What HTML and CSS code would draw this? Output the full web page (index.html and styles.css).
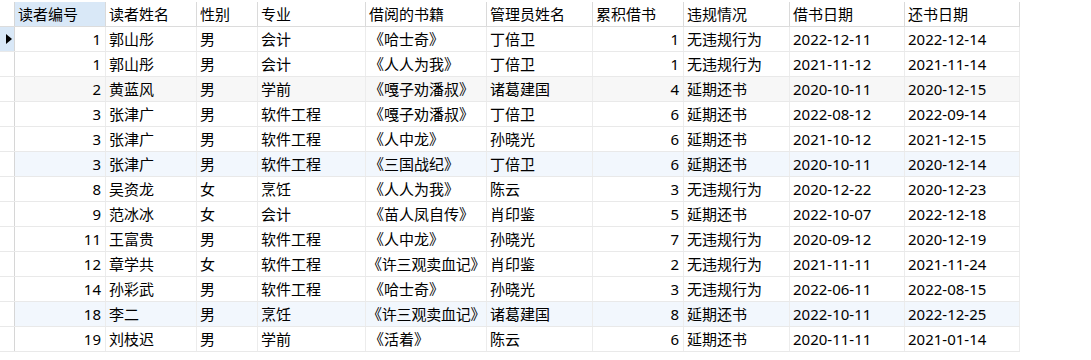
FILE: index.html
```html
<!DOCTYPE html>
<html lang="zh">
<head>
<meta charset="utf-8">
<link rel="stylesheet" href="styles.css">
</head>
<body>
<div class="grid">
  <div class="row head">
    <div class="ind"></div>
    <div class="c sel">读者编号</div>
    <div class="c">读者姓名</div>
    <div class="c">性别</div>
    <div class="c">专业</div>
    <div class="c">借阅的书籍</div>
    <div class="c">管理员姓名</div>
    <div class="c">累积借书</div>
    <div class="c">违规情况</div>
    <div class="c">借书日期</div>
    <div class="c">还书日期</div>
  </div>
  <div class="row">
    <div class="ind cur"><span class="tri"></span></div>
    <div class="c n">1</div><div class="c">郭山彤</div><div class="c">男</div><div class="c">会计</div><div class="c">《哈士奇》</div><div class="c">丁倍卫</div><div class="c n">1</div><div class="c">无违规行为</div><div class="c">2022-12-11</div><div class="c">2022-12-14</div>
  </div>
  <div class="row">
    <div class="ind"></div>
    <div class="c n">1</div><div class="c">郭山彤</div><div class="c">男</div><div class="c">会计</div><div class="c">《人人为我》</div><div class="c">丁倍卫</div><div class="c n">1</div><div class="c">无违规行为</div><div class="c">2021-11-12</div><div class="c">2021-11-14</div>
  </div>
  <div class="row grey">
    <div class="ind"></div>
    <div class="c n">2</div><div class="c">黄蓝风</div><div class="c">男</div><div class="c">学前</div><div class="c">《嘎子劝潘叔》</div><div class="c">诸葛建国</div><div class="c n">4</div><div class="c">延期还书</div><div class="c">2020-10-11</div><div class="c">2020-12-15</div>
  </div>
  <div class="row">
    <div class="ind"></div>
    <div class="c n">3</div><div class="c">张津广</div><div class="c">男</div><div class="c">软件工程</div><div class="c">《嘎子劝潘叔》</div><div class="c">丁倍卫</div><div class="c n">6</div><div class="c">延期还书</div><div class="c">2022-08-12</div><div class="c">2022-09-14</div>
  </div>
  <div class="row">
    <div class="ind"></div>
    <div class="c n">3</div><div class="c">张津广</div><div class="c">男</div><div class="c">软件工程</div><div class="c">《人中龙》</div><div class="c">孙晓光</div><div class="c n">6</div><div class="c">延期还书</div><div class="c">2021-10-12</div><div class="c">2021-12-15</div>
  </div>
  <div class="row blue">
    <div class="ind"></div>
    <div class="c n">3</div><div class="c">张津广</div><div class="c">男</div><div class="c">软件工程</div><div class="c">《三国战纪》</div><div class="c">丁倍卫</div><div class="c n">6</div><div class="c">延期还书</div><div class="c">2020-10-11</div><div class="c">2020-12-14</div>
  </div>
  <div class="row">
    <div class="ind"></div>
    <div class="c n">8</div><div class="c">吴资龙</div><div class="c">女</div><div class="c">烹饪</div><div class="c">《人人为我》</div><div class="c">陈云</div><div class="c n">3</div><div class="c">无违规行为</div><div class="c">2020-12-22</div><div class="c">2020-12-23</div>
  </div>
  <div class="row">
    <div class="ind"></div>
    <div class="c n">9</div><div class="c">范冰冰</div><div class="c">女</div><div class="c">会计</div><div class="c">《苗人凤自传》</div><div class="c">肖印鉴</div><div class="c n">5</div><div class="c">延期还书</div><div class="c">2022-10-07</div><div class="c">2022-12-18</div>
  </div>
  <div class="row">
    <div class="ind"></div>
    <div class="c n">11</div><div class="c">王富贵</div><div class="c">男</div><div class="c">软件工程</div><div class="c">《人中龙》</div><div class="c">孙晓光</div><div class="c n">7</div><div class="c">无违规行为</div><div class="c">2020-09-12</div><div class="c">2020-12-19</div>
  </div>
  <div class="row">
    <div class="ind"></div>
    <div class="c n">12</div><div class="c">章学共</div><div class="c">女</div><div class="c">软件工程</div><div class="c tight">《许三观卖血记》</div><div class="c">肖印鉴</div><div class="c n">2</div><div class="c">无违规行为</div><div class="c">2021-11-11</div><div class="c">2021-11-24</div>
  </div>
  <div class="row">
    <div class="ind"></div>
    <div class="c n">14</div><div class="c">孙彩武</div><div class="c">男</div><div class="c">软件工程</div><div class="c">《哈士奇》</div><div class="c">孙晓光</div><div class="c n">3</div><div class="c">无违规行为</div><div class="c">2022-06-11</div><div class="c">2022-08-15</div>
  </div>
  <div class="row blue">
    <div class="ind"></div>
    <div class="c n">18</div><div class="c">李二</div><div class="c">男</div><div class="c">烹饪</div><div class="c tight">《许三观卖血记》</div><div class="c">诸葛建国</div><div class="c n">8</div><div class="c">延期还书</div><div class="c">2022-10-11</div><div class="c">2022-12-25</div>
  </div>
  <div class="row">
    <div class="ind"></div>
    <div class="c n">19</div><div class="c">刘枝迟</div><div class="c">男</div><div class="c">学前</div><div class="c">《活着》</div><div class="c">陈云</div><div class="c n">6</div><div class="c">延期还书</div><div class="c">2020-11-11</div><div class="c">2021-01-14</div>
  </div>
</div>
</body>
</html>
```
FILE: styles.css
```css
html, body {
  margin: 0;
  padding: 0;
  background: #ffffff;
}
body {
  font-family: "Noto Sans", "Noto Sans CJK SC", sans-serif;
  font-size: 15px;
  color: #000;
}
.grid {
  width: 1020px;
}
.row {
  display: grid;
  grid-template-columns: 15px 91px 91px 61px 108px 121px 106px 91px 106px 115px 115px;
  height: 25px;
  box-sizing: border-box;
  border-bottom: 1px solid #e9e9e9;
}
.row.head {
  height: 27px;
  padding-top: 2px;
  border-bottom: 1px solid #dcdcdc;
}
.row.grey { background: #f7f7f7; }
.row.blue { background: #f2f7fd; }
.c {
  box-sizing: border-box;
  border-right: 1px solid #ececec;
  padding: 0 3px;
  line-height: 24px;
  white-space: nowrap;
}
.c.tight {
  padding-left: 1px;
  padding-right: 0;
  letter-spacing: -0.2px;
}
.head .c {
  border-right-color: #dadada;
}
.head .c.sel {
  background: #d9e8f7;
}
.c.n {
  text-align: right;
  padding-right: 4px;
}
.ind {
  box-sizing: border-box;
  border-right: 1px solid #d6d6d6;
  background: #fff;
  display: flex;
  align-items: center;
  padding-left: 6px;
}
.ind.cur {
  background: #d9e8f7;
}
.tri {
  width: 0;
  height: 0;
  border-top: 5px solid transparent;
  border-bottom: 5px solid transparent;
  border-left: 6px solid #000;
}
```
